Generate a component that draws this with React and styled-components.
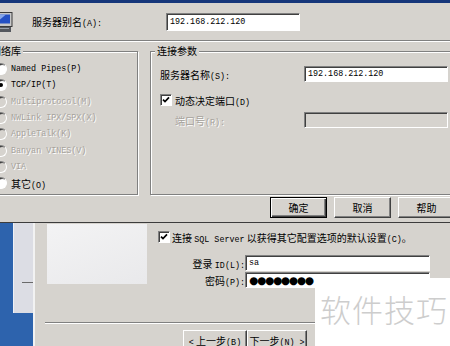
import React from 'react';
import styled, { createGlobalStyle, css } from 'styled-components';

const FACE = '#d6d3ce';
const SHADOW = '#808080';
const DARK = '#404040';

const GlobalStyle = createGlobalStyle`
  html, body {
    margin: 0;
    padding: 0;
  }
  body {
    background: ${FACE};
    font-family: "Noto Sans CJK SC", "Liberation Sans", sans-serif;
    font-size: 10px;
    color: #000;
  }
`;

const Screen = styled.div`
  position: relative;
  width: 450px;
  height: 346px;
  overflow: hidden;
  display: flex;
  flex-direction: column;
  background: ${FACE};
`;

const TitleEdge = styled.div`
  flex: none;
  height: 3px;
  background: #16367a;
`;

const Dialog = styled.div`
  flex: none;
  height: 219px;
  display: flex;
  flex-direction: column;
  border-bottom: 1px solid #3c3c3c;
`;

// latin parts of the labels, narrow fixed pitch like the bitmap font
const Lat = styled.span`
  font-family: "Liberation Mono", monospace;
  font-size: 8.4px;
`;

const AliasRow = styled.div`
  flex: none;
  height: 37px;
  display: flex;
  align-items: center;
`;

const AliasLabel = styled.label`
  margin-left: 18px;
  width: 134px;
  white-space: nowrap;
`;

const TextBox = styled.div`
  flex: none;
  box-sizing: border-box;
  width: ${(p) => p.$w}px;
  height: ${(p) => p.$h || 16}px;
  padding-left: 3px;
  display: flex;
  align-items: center;
  background: ${(p) => (p.$disabled ? FACE : '#fff')};
  border: 1px solid;
  border-color: ${SHADOW} #fff #fff ${SHADOW};
  box-shadow: inset 1px 1px 0 ${DARK};
  font-family: "Liberation Mono", monospace;
  font-size: 8.4px;
  white-space: nowrap;
  overflow: hidden;
`;

const Dots = styled.span`
  font-family: "DejaVu Sans", sans-serif;
  font-size: 10.5px;
  letter-spacing: -1.2px;
  line-height: 1;
`;

const Etch = styled.div`
  flex: none;
  height: 0;
  margin-left: ${(p) => p.$inset || 0}px;
  border-top: 1px solid ${SHADOW};
  border-bottom: 1px solid #fff;
`;

const GroupsRow = styled.div`
  flex: none;
  height: 150px;
  padding-top: 3px;
  display: flex;
`;

const Group = styled.fieldset`
  flex: none;
  box-sizing: border-box;
  min-width: 0;
  width: ${(p) => p.$w}px;
  height: 150px;
  margin: 0 0 0 ${(p) => p.$ml}px;
  padding: 0;
  border: 1px solid ${SHADOW};
  box-shadow: inset 1px 1px 0 #fff, 1px 1px 0 #fff;
`;

const Legend = styled.legend`
  margin-left: ${(p) => p.$ml}px;
  padding: 0 2px;
  line-height: 12px;
  background: ${FACE};
`;

const RadioList = styled.div`
  display: flex;
  flex-direction: column;
  padding: 4px 0 0 9px;
`;

const RadioRow = styled.div`
  height: 16.3px;
  display: flex;
  align-items: center;
  gap: 4px;
  white-space: nowrap;
  color: ${(p) => (p.$disabled ? '#a7a39d' : '#000')};
  text-shadow: ${(p) => (p.$disabled ? '1px 1px 0 #fff' : 'none')};
`;

const RadioDot = styled.span`
  flex: none;
  box-sizing: border-box;
  width: 12px;
  height: 12px;
  border-radius: 50%;
  display: flex;
  align-items: center;
  justify-content: center;
  background: ${(p) => (p.$disabled ? FACE : '#fff')};
  border: 1px solid;
  border-color: ${SHADOW} #fff #fff ${SHADOW};
  box-shadow: inset 1px 1px 0 ${DARK};

  &::after {
    content: '';
    display: ${(p) => (p.$on ? 'block' : 'none')};
    width: 4px;
    height: 4px;
    border-radius: 50%;
    background: #000;
  }
`;

const ParamForm = styled.div`
  display: flex;
  flex-direction: column;
  padding: 9px 0 0 9px;
`;

const FormRow = styled.div`
  flex: none;
  height: 16px;
  margin-top: ${(p) => p.$mt || 0}px;
  display: flex;
  align-items: center;
  gap: ${(p) => p.$gap || 0}px;
  white-space: nowrap;
`;

const RowLabel = styled.span`
  flex: none;
  width: ${(p) => p.$w}px;
  margin-left: ${(p) => p.$indent || 0}px;
  text-align: ${(p) => p.$align || 'left'};
  white-space: nowrap;
  color: ${(p) => (p.$disabled ? '#a7a39d' : '#000')};
  text-shadow: ${(p) => (p.$disabled ? '1px 1px 0 #fff' : 'none')};
`;

const CheckFrame = styled.span`
  flex: none;
  box-sizing: border-box;
  width: 12px;
  height: 12px;
  display: flex;
  align-items: center;
  justify-content: center;
  background: #fff;
  border: 1px solid;
  border-color: ${SHADOW} #fff #fff ${SHADOW};
  box-shadow: inset 1px 1px 0 ${DARK};
`;

const ButtonBar = styled.div`
  flex: none;
  margin: 2px -5px 0 0;
  display: flex;
  justify-content: flex-end;
  gap: 7px;
`;

const Button = styled.button`
  flex: none;
  box-sizing: border-box;
  width: ${(p) => p.$w || 57}px;
  height: ${(p) => p.$h || 21}px;
  padding: 0;
  font: inherit;
  color: #000;
  background: ${FACE};
  border: 1px solid;
  border-color: #fff ${DARK} ${DARK} #fff;
  box-shadow: inset -1px -1px 0 ${SHADOW};
  white-space: nowrap;

  ${(p) =>
    p.$default &&
    css`
      border-color: #000;
      box-shadow: inset 1px 1px 0 #fff, inset -1px -1px 0 ${DARK},
        inset -2px -2px 0 ${SHADOW};
    `}
`;

const Wizard = styled.div`
  flex: 1;
  display: flex;
  min-height: 0;
`;

const SideArt = styled.div`
  flex: none;
  width: 33px;
  display: flex;
  flex-direction: column;
  background: #2d63ad;
  border-right: 2px solid #f2f2f2;
`;

const SidePanel = styled.div`
  box-sizing: border-box;
  height: 90px;
  margin-left: 13px;
  display: flex;
  flex-direction: column;
  background: #dcdde4;
  border-left: 1px solid #eef0f6;
`;

const SideTick = styled.div`
  margin: 59px 0 0 8px;
  border-top: 1px solid #6a6a6a;
`;

const WizardMain = styled.div`
  flex: 1;
  display: flex;
  flex-direction: column;
`;

const WizardTop = styled.div`
  flex: none;
  height: 99px;
  display: flex;
`;

const Picture = styled.div`
  flex: none;
  width: 100px;
  height: 60px;
  margin: 1px 0 0 12px;
  background: linear-gradient(160deg, #f3f3f4, #e9e9eb);
`;

const WizardForm = styled.div`
  margin-left: 11px;
  display: flex;
  flex-direction: column;
`;

const WizardButtons = styled.div`
  flex: none;
  margin-left: 148px;
  padding-top: 6px;
  display: flex;
`;

const Watermark = styled.div`
  position: absolute;
  left: 315px;
  top: 278px;
  right: 0;
  bottom: 0;
  padding: 15px 0 0 5px;
  background: #fff;
  color: #cdcdcd;
  font-size: 31px;
  font-weight: 300;
  line-height: 1;
  letter-spacing: 1px;
  white-space: nowrap;
`;

const ServerIcon = () => (
  <svg width="14" height="22" viewBox="0 0 14 22">
    <rect x="-4" y="1.5" width="16" height="14" fill="#c8c8c8" stroke="#3a3a3a" />
    <rect x="-2" y="3.5" width="12" height="9" fill="#2450c4" />
    <path d="M-2 3.5 H6 L-2 10 Z" fill="#86a6ea" />
    <rect x="-3" y="16" width="14" height="5" fill="#55585e" />
    <rect x="-1" y="17" width="10" height="1" fill="#9aa0aa" />
  </svg>
);

const CheckBox = () => (
  <CheckFrame>
    <svg width="8" height="8" viewBox="0 0 8 8">
      <path d="M1 3.6 L3 5.6 L7 1.4" fill="none" stroke="#000" strokeWidth="1.7" />
    </svg>
  </CheckFrame>
);

const protocols = [
  { label: 'Named Pipes(P)', lat: true },
  { label: 'TCP/IP(T)', lat: true, on: true },
  { label: 'Multiprotocol(M)', lat: true, disabled: true },
  { label: 'NWLink IPX/SPX(X)', lat: true, disabled: true },
  { label: 'AppleTalk(K)', lat: true, disabled: true },
  { label: 'Banyan VINES(V)', lat: true, disabled: true },
  { label: 'VIA', lat: true, disabled: true },
  { label: '其它', suffix: '(O)' },
];

export default function App() {
  return (
    <Screen>
      <GlobalStyle />
      <TitleEdge />
      <Dialog>
        <AliasRow>
          <ServerIcon />
          <AliasLabel>
            服务器别名<Lat>(A):</Lat>
          </AliasLabel>
          <TextBox $w={134} $h={18}>192.168.212.120</TextBox>
        </AliasRow>
        <Etch />
        <GroupsRow>
          <Group $ml={-15} $w={153}>
            <Legend $ml={3}>网络库</Legend>
            <RadioList>
              {protocols.map((p) => (
                <RadioRow key={p.label} $disabled={p.disabled}>
                  <RadioDot $on={p.on} $disabled={p.disabled} />
                  {p.lat ? (
                    <Lat>{p.label}</Lat>
                  ) : (
                    <span>
                      {p.label}
                      <Lat>{p.suffix}</Lat>
                    </span>
                  )}
                </RadioRow>
              ))}
            </RadioList>
          </Group>
          <Group $ml={12} $w={310}>
            <Legend $ml={4}>连接参数</Legend>
            <ParamForm>
              <FormRow>
                <RowLabel $w={144}>
                  服务器名称<Lat>(S):</Lat>
                </RowLabel>
                <TextBox $w={144}>192.168.212.120</TextBox>
              </FormRow>
              <FormRow $mt={10} $gap={3}>
                <CheckBox />
                <span>
                  动态决定端口<Lat>(D)</Lat>
                </span>
              </FormRow>
              <FormRow $mt={4}>
                <RowLabel $w={129} $indent={15} $disabled>
                  端口号<Lat>(R):</Lat>
                </RowLabel>
                <TextBox $w={144} $disabled />
              </FormRow>
            </ParamForm>
          </Group>
        </GroupsRow>
        <ButtonBar>
          <Button $default>确定</Button>
          <Button>取消</Button>
          <Button>帮助</Button>
        </ButtonBar>
      </Dialog>

      <Wizard>
        <SideArt>
          <SidePanel>
            <SideTick />
          </SidePanel>
        </SideArt>
        <WizardMain>
          <WizardTop>
            <Picture />
            <WizardForm>
              <FormRow $mt={6} $gap={2}>
                <CheckBox />
                <span>
                  连接 <Lat>SQL Server</Lat> 以获得其它配置选项的默认设置<Lat>(C)</Lat>。
                </span>
              </FormRow>
              <FormRow $mt={10}>
                <RowLabel $w={87} $align="right">
                  登录 <Lat>ID(L):</Lat>
                </RowLabel>
                <TextBox $w={185}>sa</TextBox>
              </FormRow>
              <FormRow $mt={1}>
                <RowLabel $w={87} $align="right">
                  密码<Lat>(P):</Lat>
                </RowLabel>
                <TextBox $w={185}>
                  <Dots>●●●●●●●●</Dots>
                </TextBox>
              </FormRow>
            </WizardForm>
          </WizardTop>
          <Etch $inset={10} />
          <WizardButtons>
            <Button $w={64} $h={20}>
              <Lat>&lt;</Lat> 上一步<Lat>(B)</Lat>
            </Button>
            <Button $w={60} $h={20}>
              下一步<Lat>(N) &gt;</Lat>
            </Button>
          </WizardButtons>
        </WizardMain>
      </Wizard>

      <Watermark>软件技巧</Watermark>
    </Screen>
  );
}
